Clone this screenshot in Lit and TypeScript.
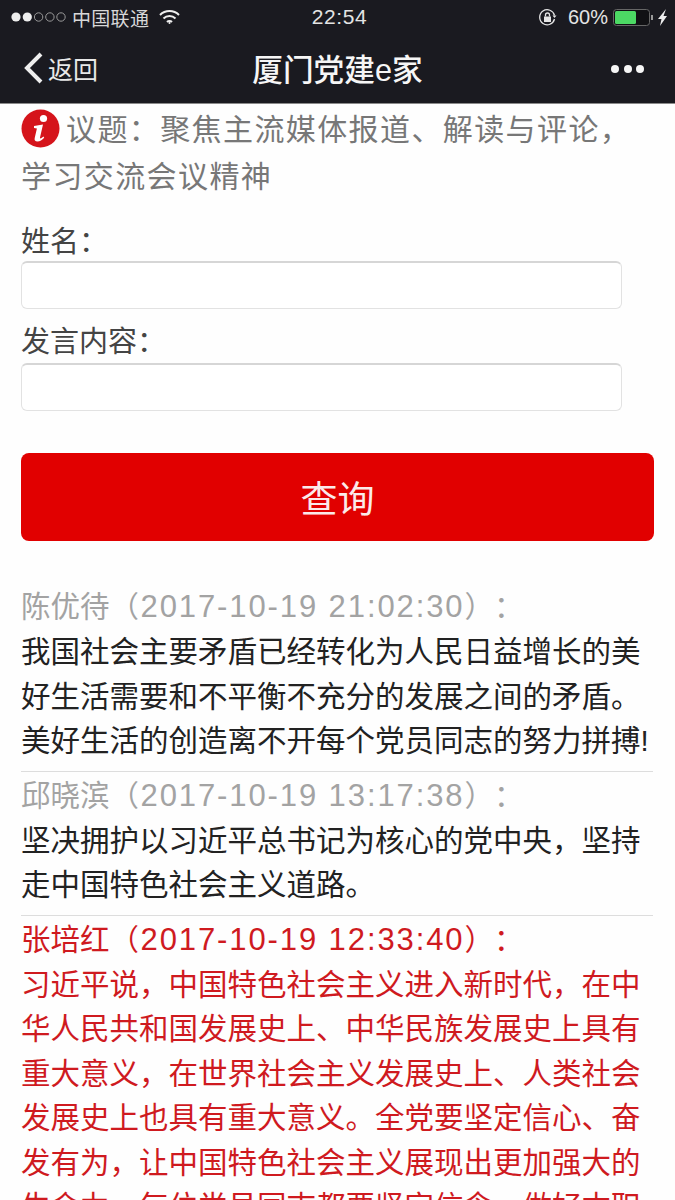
import { LitElement, html, css } from 'lit';
import { customElement } from 'lit/decorators.js';

type Comment = { name: string; time: string; body: string[]; hot?: boolean };

const comments: Comment[] = [
  {
    name: '陈优待',
    time: '2017-10-19 21:02:30',
    body: ['我国社会主要矛盾已经转化为人民日益增长的美', '好生活需要和不平衡不充分的发展之间的矛盾。', '美好生活的创造离不开每个党员同志的努力拼搏!'],
  },
  {
    name: '邱晓滨',
    time: '2017-10-19 13:17:38',
    body: ['坚决拥护以习近平总书记为核心的党中央，坚持', '走中国特色社会主义道路。'],
  },
  {
    name: '张培红',
    time: '2017-10-19 12:33:40',
    body: [
      '习近平说，中国特色社会主义进入新时代，在中',
      '华人民共和国发展史上、中华民族发展史上具有',
      '重大意义，在世界社会主义发展史上、人类社会',
      '发展史上也具有重大意义。全党要坚定信心、奋',
      '发有为，让中国特色社会主义展现出更加强大的',
      '生命力。每位党员同志都要坚定信念，做好本职',
    ],
    hot: true,
  },
];

@customElement('app-root')
export class AppRoot extends LitElement {
  static styles = css`
    :host {
      display: block;
      width: 675px;
      height: 1200px;
      overflow: hidden;
      background: #fefefe;
      font-family: 'Liberation Sans', 'Noto Sans CJK SC', sans-serif;
      color: #3c3c3c;
      text-spacing-trim: space-all;
    }
    .status {
      height: 34px;
      background: #1a1a20;
      color: #e4e4e4;
      display: grid;
      grid-template-columns: 1fr auto 1fr;
      align-items: center;
      padding: 0 8px 0 11px;
    }
    .status-left, .status-right { display: flex; align-items: center; }
    .status-right { justify-content: flex-end; }
    .carrier { margin-left: 6px; font-size: 19px; letter-spacing: 0.3px; color: #d8d8d8; }
    .wifi { margin-left: 10px; }
    .clock { font-size: 21px; letter-spacing: 0.6px; margin-left: 1px; }
    .pct { margin: 0 5px 0 11px; font-size: 20px; }
    .nav {
      height: 70px;
      background: #1a1a20;
      border-bottom: 1px solid #8a8a8a;
      box-sizing: border-box;
      display: grid;
      grid-template-columns: 1fr auto 1fr;
      align-items: center;
      padding: 0 23px 3px;
      color: #f4f4f4;
    }
    .back { display: flex; align-items: center; gap: 4px; font-size: 25px; color: #e8e8e8; padding-top: 1px; }
    .title { font-size: 30.7px; font-weight: 500; color: #f6f6f6; }
    .more { display: flex; justify-content: flex-end; gap: 4.500px; padding: 3px 8px 0 0; }
    .more i { width: 8px; height: 8px; border-radius: 50%; background: #f6f6f6; }
    .main { padding: 0 21px; }
    .topic { font-size: 30px; line-height: 47px; color: #777; margin: 2px 0 0; letter-spacing: 1.4px; }
    .topic svg { vertical-align: -8px; margin-right: 6px; }
    .label { font-size: 29px; line-height: 44px; height: 41px; color: #444; margin-top: 20px; }
    .label.next { margin-top: 11px; height: 43px; }
    .input {
      width: 601px;
      height: 48px;
      box-sizing: border-box;
      background: #fff;
      border: 1px solid #e2e2e2;
      border-top: 2px solid #d6d6d6;
      border-radius: 6px;
    }
    .query {
      display: block;
      width: 633px;
      height: 88px;
      margin-top: 42px;
      border: 0;
      border-radius: 8px;
      background: #e10000;
      color: #fbeaea;
      font: inherit;
      font-size: 37px;
    }
    .list { margin-top: 43px; width: 632px; }
    .item { padding-bottom: 7px; border-bottom: 1px solid #ddd; margin-bottom: 1px; }
    .item:last-child { border-bottom: 0; }
    .head { font-size: 29.5px; line-height: 46px; height: 46px; color: #a3a3a3; white-space: nowrap; }
    .stamp { font-size: 31px; letter-spacing: 1.9px; margin-left: 1.5px; }
    .line { font-size: 29.5px; line-height: 44.5px; color: #222; white-space: nowrap; }
    .hot .head, .hot .line { color: #cf1a1f; }
  `;

  render() {
    return html`
      <div class="status">
        <div class="status-left">
          <svg width="55" height="12" viewBox="0 0 55 12">
            <circle cx="5" cy="6" r="4.6" fill="#eee" />
            <circle cx="16.300" cy="6" r="4.6" fill="#eee" />
            <circle cx="27.600" cy="6" r="4.2" fill="none" stroke="#999" />
            <circle cx="38.900" cy="6" r="4.2" fill="none" stroke="#999" />
            <circle cx="50" cy="6" r="4.2" fill="none" stroke="#999" />
          </svg>
          <span class="carrier">中国联通</span>
          <svg class="wifi" width="21" height="15" viewBox="0 0 21 15" fill="none" stroke="#eee" stroke-width="2">
            <path d="M1 5a13.500 13.500 0 0 1 19 0" />
            <path d="M4.500 8.500a8.500 8.500 0 0 1 12 0" />
            <path d="M8 12a3.500 3.500 0 0 1 5 0" />
            <circle cx="10.500" cy="13" r="1" fill="#eee" stroke="none" />
          </svg>
        </div>
        <span class="clock">22:54</span>
        <div class="status-right">
          <svg width="19" height="19" viewBox="0 0 19 19" fill="none" stroke="#e4e4e4" stroke-width="1.3">
            <path d="M16.500 11a7.500 7.500 0 1 1 0-3.500" />
            <path d="M14.500 7.500h4l-2 2.500z" fill="#e4e4e4" stroke="none" />
            <rect x="6" y="8.500" width="7" height="5.500" fill="#e4e4e4" stroke="none" />
            <path d="M7.500 8.500V7a2 2 0 0 1 4 0v1.500" />
          </svg>
          <span class="pct">60%</span>
          <svg width="54" height="17" viewBox="0 0 54 17">
            <rect x="0.500" y="0.500" width="36" height="16" rx="3" fill="#111114" stroke="#666" />
            <rect x="2" y="2" width="21" height="13" rx="1.500" fill="#4cd964" />
            <rect x="38" y="6" width="2" height="5" fill="#999" />
            <path d="M53 0l-8 10h3.500l-1.500 7 7-10h-3.500z" fill="#eee" />
          </svg>
        </div>
      </div>
      <div class="nav">
        <div class="back">
          <svg width="21" height="32" viewBox="0 0 21 32" fill="none" stroke="#eee" stroke-width="4">
            <path d="M18 2L4 16l14 14" />
          </svg>
          <span>返回</span>
        </div>
        <div class="title">厦门党建e家</div>
        <div class="more"><i></i><i></i><i></i></div>
      </div>
      <div class="main">
        <p class="topic">
          <svg width="39" height="39" viewBox="0 0 39 39">
            <circle cx="19.500" cy="19.500" r="19" fill="#d5141b" />
            <circle cx="22.500" cy="9.500" r="3.600" fill="#fff" />
            <path d="M13 17l9-1.500-3 13c-.2 1 .6 1.200 1.500.6l2-1.600.7 1.200c-2 2.300-4.300 3.800-6.700 3.800-2.500 0-3.300-1.500-2.800-3.600l2.200-9.500-2.900-.4z" fill="#fff" />
          </svg>议题：聚焦主流媒体报道、解读与评论，<br />学习交流会议精神
        </p>
        <div class="label">姓名：</div>
        <div class="input"></div>
        <div class="label next">发言内容：</div>
        <div class="input"></div>
        <button class="query">查询</button>
        <div class="list">
          ${comments.map(
            (c) => html`
              <div class="item ${c.hot ? 'hot' : ''}">
                <div class="head">${c.name}（<span class="stamp">${c.time}</span>）：</div>
                ${c.body.map((l) => html`<div class="line">${l}</div>`)}
              </div>
            `,
          )}
        </div>
      </div>
    `;
  }
}
